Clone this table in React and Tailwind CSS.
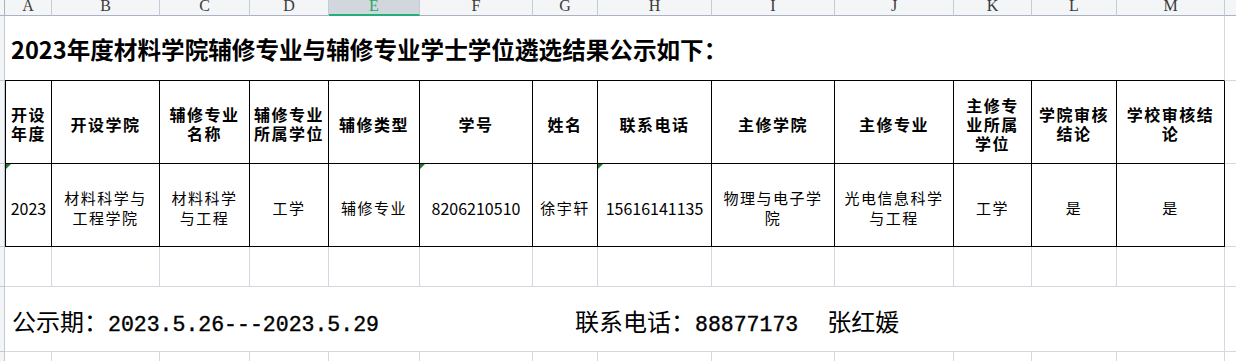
import React from "react";

const GRID =
  "grid grid-cols-[5px_47px_108px_90px_79px_91px_113px_65px_114px_123px_119px_78px_85px_108px_11px]";

const letters = ["A", "B", "C", "D", "E", "F", "G", "H", "I", "J", "K", "L", "M"];

const headers = [
  ["开设", "年度"],
  ["开设学院"],
  ["辅修专业", "名称"],
  ["辅修专业", "所属学位"],
  ["辅修类型"],
  ["学号"],
  ["姓名"],
  ["联系电话"],
  ["主修学院"],
  ["主修专业"],
  ["主修专", "业所属", "学位"],
  ["学院审核", "结论"],
  ["学校审核结", "论"],
];

const row = [
  { lines: ["2023"], num: true, flag: true },
  { lines: ["材料科学与", "工程学院"] },
  { lines: ["材料科学", "与工程"] },
  { lines: ["工学"] },
  { lines: ["辅修专业"] },
  { lines: ["8206210510"], num: true, flag: true },
  { lines: ["徐宇轩"] },
  { lines: ["15616141135"], num: true, flag: true },
  { lines: ["物理与电子学", "院"] },
  { lines: ["光电信息科学", "与工程"] },
  { lines: ["工学"] },
  { lines: ["是"] },
  { lines: ["是"] },
];

function Strip({ h }) {
  return <div className={`${h} bg-[#f3f4f6] border-r border-b border-[#c3c9d4]`} />;
}

export default function App() {
  return (
    <div className="w-[1236px] h-[361px] overflow-hidden bg-white text-black font-['Noto_Sans_CJK_SC',sans-serif]">
      {/* column letters */}
      <div className={`${GRID} h-[16px] bg-[#f4f5f7]`}>
        <div className="border-r border-b border-[#a9b3c4]" />
        {letters.map((l) =>
          l === "E" ? (
            <div
              key={l}
              className="overflow-hidden bg-[#d2d6dd] border-r border-r-[#c5cbd6] border-b-2 border-b-[#21b07a] text-center font-['Liberation_Serif',serif] text-[16px] leading-[16px] text-[#1fa86b]"
            >
              <span className="relative -top-[2px]">{l}</span>
            </div>
          ) : (
            <div
              key={l}
              className="overflow-hidden border-r border-r-[#c5cbd6] border-b border-b-[#a9b3c4] text-center font-['Liberation_Serif',serif] text-[16px] leading-[16px] text-[#3a3a3a]"
            >
              <span className="relative -top-[2px]">{l}</span>
            </div>
          )
        )}
        <div className="border-b border-[#a9b3c4]" />
      </div>

      {/* title */}
      <div className={GRID}>
        <Strip h="h-[65px]" />
        <div className="col-span-13 h-[65px] flex items-center pl-[6px] pt-[3px] border-r border-b border-r-[#d4d8e0] border-b-black whitespace-nowrap text-[23.6px] font-bold">
          2023年度材料学院辅修专业与辅修专业学士学位遴选结果公示如下：
        </div>
        <div className="border-b border-[#d4d8e0]" />
      </div>

      {/* table header */}
      <div className={GRID}>
        <Strip h="h-[83px]" />
        {headers.map((lines, i) => (
          <div
            key={i}
            className={`h-[83px] flex flex-col items-center justify-center pt-[4px] border-r border-b border-black ${i === 0 ? "border-l" : ""} text-[16px] font-bold leading-[19px] tracking-[1.5px] whitespace-nowrap`}
          >
            {lines.map((t) => (
              <span key={t}>{t}</span>
            ))}
          </div>
        ))}
        <div className="border-b border-[#d4d8e0]" />
      </div>

      {/* data row */}
      <div className={GRID}>
        <Strip h="h-[83px]" />
        {row.map((c, i) => (
          <div
            key={i}
            className={`relative h-[83px] flex flex-col items-center justify-center pt-[5px] border-r border-b border-black ${i === 0 ? "border-l" : ""} leading-[20px] whitespace-nowrap ${c.num ? "text-[16px]" : "text-[15px] tracking-[1.5px]"}`}
          >
            {c.flag && (
              <span className="absolute left-0 top-0 w-0 h-0 border-t-[5px] border-r-[5px] border-t-[#1d7a2e] border-r-transparent" />
            )}
            {c.lines.map((t) => (
              <span key={t}>{t}</span>
            ))}
          </div>
        ))}
        <div className="border-b border-[#d4d8e0]" />
      </div>

      {/* empty row */}
      <div className={GRID}>
        <Strip h="h-[40px]" />
        {letters.map((l) => (
          <div key={l} className="h-[40px] border-r border-b border-[#d4d8e0]" />
        ))}
        <div className="border-b border-[#d4d8e0]" />
      </div>

      {/* footer */}
      <div className={GRID}>
        <Strip h="h-[65px]" />
        <div className="col-span-13 h-[65px] flex items-center pl-[7px] pt-[6px] border-r border-b border-[#d4d8e0] whitespace-nowrap">
          <div className="w-[563px] flex items-baseline">
            <span className="text-[24px]">公示期：</span>
            <span className="font-['Liberation_Mono',monospace] text-[21.5px] [-webkit-text-stroke:0.4px_black]">2023.5.26---2023.5.29</span>
          </div>
          <div className="flex items-baseline">
            <span className="text-[24px]">联系电话：</span>
            <span className="font-['Liberation_Mono',monospace] text-[21.5px] [-webkit-text-stroke:0.4px_black]">88877173</span>
            <span className="ml-[29px] text-[24px]">张红媛</span>
          </div>
        </div>
        <div className="border-b border-[#d4d8e0]" />
      </div>

      {/* next row */}
      <div className={GRID}>
        <Strip h="h-[20px]" />
        {letters.map((l) => (
          <div key={l} className="h-[20px] border-r border-b border-[#d4d8e0]" />
        ))}
        <div className="border-b border-[#d4d8e0]" />
      </div>
    </div>
  );
}
